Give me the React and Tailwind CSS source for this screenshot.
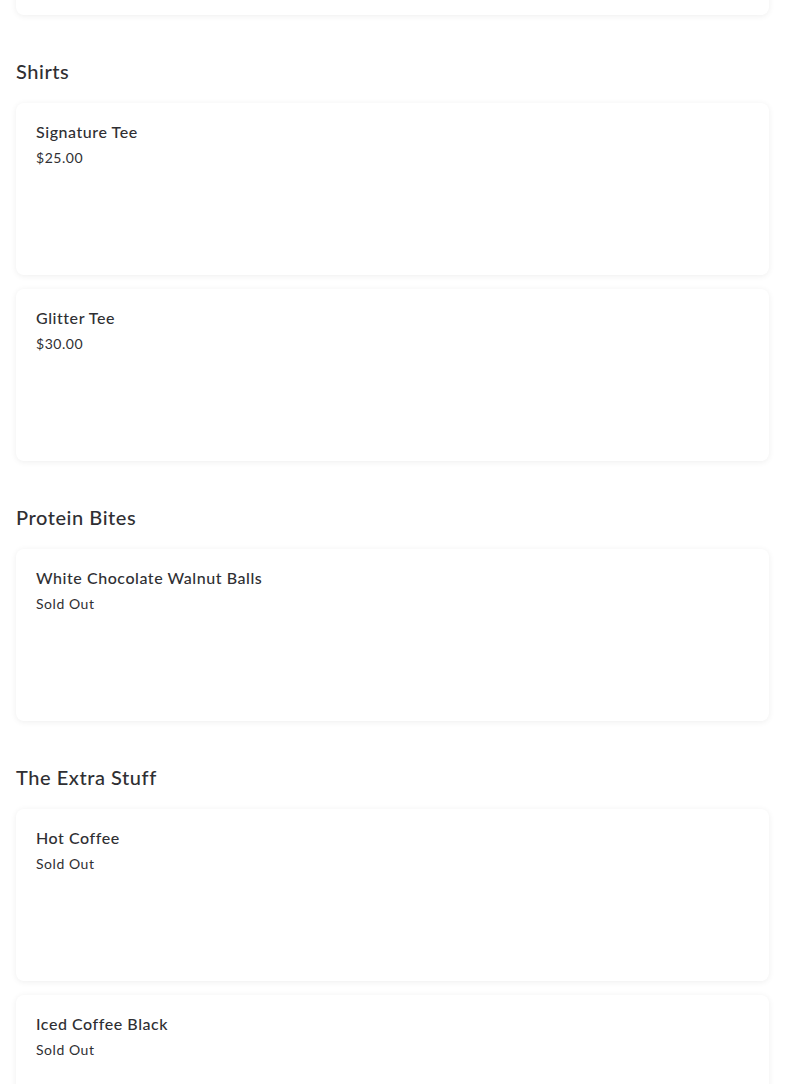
import React from 'react';

const sections = [
  { title: 'Shirts', items: [{ name: 'Signature Tee', price: '$25.00' }, { name: 'Glitter Tee', price: '$30.00' }] },
  { title: 'Protein Bites', items: [{ name: 'White Chocolate Walnut Balls', price: 'Sold Out' }] },
  { title: 'The Extra Stuff', items: [{ name: 'Hot Coffee', price: 'Sold Out' }, { name: 'Iced Coffee Black', price: 'Sold Out' }] },
];

const Card = ({ name, price }) => (
  <div className="h-[172px] rounded-lg bg-white px-5 pt-[17px] shadow-[0_1px_6px_rgba(0,0,0,0.07)]">
    <p className="text-[16px] leading-6 font-medium tracking-[0.55px] text-[#2f2f33]">{name}</p>
    <p className="text-[14px] leading-7 tracking-[0.55px] text-[#2f2f33]">{price}</p>
  </div>
);

export default function App() {
  return (
    <div className="min-h-screen bg-white px-4 overflow-hidden" style={{ fontFamily: '"Lato", "Noto Sans", sans-serif' }}>
      <div className="-mt-[157px] h-[172px] rounded-lg bg-white shadow-[0_1px_6px_rgba(0,0,0,0.07)]" />
      {sections.map((s) => (
        <div key={s.title}>
          <h2 className="mt-[42px] mb-[18px] text-[20px] leading-7 font-medium tracking-[0.55px] text-[#2f2f33]">{s.title}</h2>
          <div className="flex flex-col gap-[14px]">
            {s.items.map((it) => <Card key={it.name} {...it} />)}
          </div>
        </div>
      ))}
    </div>
  );
}
